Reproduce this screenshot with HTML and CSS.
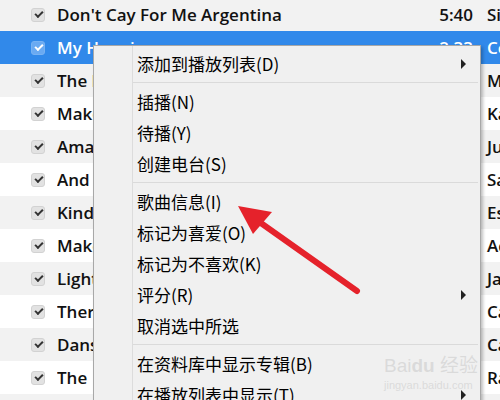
FILE: index.html
```html
<!DOCTYPE html>
<html lang="zh-CN">
<head>
  <meta charset="UTF-8" />
  <title>歌曲列表</title>
  <link rel="stylesheet" href="styles.css">
</head>
<body>
  <div class="tela">
    <ul class="lista">
      <li class="faixa"><span class="caixa"></span><span class="nome">Don't Cay For Me Argentina</span><span class="tempo">5:40</span><span class="artista">Si</span></li>
      <li class="faixa ativa"><span class="caixa"></span><span class="nome">My Happiness</span><span class="tempo">2:33</span><span class="artista">Co</span></li>
      <li class="faixa"><span class="caixa"></span><span class="nome">The Rose</span><span class="tempo">3:40</span><span class="artista">Mi</span></li>
      <li class="faixa"><span class="caixa"></span><span class="nome">Make You Feel My Love</span><span class="tempo">3:32</span><span class="artista">Ka</span></li>
      <li class="faixa"><span class="caixa"></span><span class="nome">Amazing Grace</span><span class="tempo">4:02</span><span class="artista">Ju</span></li>
      <li class="faixa"><span class="caixa"></span><span class="nome">And I Love You So</span><span class="tempo">3:10</span><span class="artista">Sa</span></li>
      <li class="faixa"><span class="caixa"></span><span class="nome">Kind &amp; Generous</span><span class="tempo">3:45</span><span class="artista">Es</span></li>
      <li class="faixa"><span class="caixa"></span><span class="nome">Make It With You</span><span class="tempo">3:18</span><span class="artista">Ad</span></li>
      <li class="faixa"><span class="caixa"></span><span class="nome">Lighthouse</span><span class="tempo">4:21</span><span class="artista">Ja</span></li>
      <li class="faixa"><span class="caixa"></span><span class="nome">There You'll Be</span><span class="tempo">3:42</span><span class="artista">Ca</span></li>
      <li class="faixa"><span class="caixa"></span><span class="nome">Danse Avec Moi</span><span class="tempo">3:55</span><span class="artista">Ca</span></li>
      <li class="faixa"><span class="caixa"></span><span class="nome">The  Sound of Silence</span><span class="tempo">3:07</span><span class="artista">Ra</span></li>
      <li class="faixa"><span class="caixa"></span><span class="nome">Yesterday</span><span class="tempo">2:05</span><span class="artista">Be</span></li>
    </ul>

    <div class="menu">
      <div class="item sub">添加到播放列表(D)</div>
      <div class="linha"></div>
      <div class="item">插播(N)</div>
      <div class="item">待播(Y)</div>
      <div class="item">创建电台(S)</div>
      <div class="linha"></div>
      <div class="item">歌曲信息(I)</div>
      <div class="item">标记为喜爱(O)</div>
      <div class="item">标记为不喜欢(K)</div>
      <div class="item sub">评分(R)</div>
      <div class="item">取消选中所选</div>
      <div class="linha"></div>
      <div class="item">在资料库中显示专辑(B)</div>
      <div class="item sub">在播放列表中显示(T)</div>
      <div class="marca">Bai<b>du</b> 经验<small>jingyan.baidu.com</small></div>
    </div>

    <svg class="seta" width="500" height="400" viewBox="0 0 500 400">
      <line x1="357" y1="291" x2="258" y2="221" stroke="#e5222b" stroke-width="6" stroke-linecap="round" />
      <polygon points="238,206 272,212 253,234" fill="#e5222b" />
    </svg>
  </div>
</body>
</html>
```

FILE: styles.css
```css
:root {
  --cinza-linha: #f2f2f2;
  --azul-sel: #3189ea;
  --fundo-menu: #f0f0f0;
  --borda-menu: #a8a8a8;
  --separador: #dadada;
}
* {
  box-sizing: border-box;
}
body {
  margin: 0;
  width: 500px;
  height: 400px;
  overflow: hidden;
  background: white;
}
.tela {
  position: relative;
  width: 500px;
  height: 400px;
  overflow: hidden;
}
.lista {
  list-style: none;
  margin: -2px 0 0;
  padding: 0;
  width: 500px;
  font-family: 'Open Sans', 'Noto Sans', sans-serif;
  font-weight: 600;
  font-size: 17px;
  color: #111;
}
.faixa {
  display: flex;
  align-items: center;
  height: 33px;
  white-space: pre;
  overflow: hidden;
}
.faixa:nth-child(odd) {
  background-color: var(--cinza-linha);
}
.faixa.ativa {
  background-color: var(--azul-sel);
  color: white;
}
.caixa {
  width: 14px;
  height: 14px;
  margin-left: 31px;
  margin-right: 12px;
  border-radius: 3px;
  background-color: #e2e2e2;
  border: 1px solid #d2d2d2;
  position: relative;
  flex: none;
}
.caixa::after {
  content: '';
  position: absolute;
  left: 3px;
  top: 2px;
  width: 6px;
  height: 3px;
  border-left: 2px solid #333;
  border-bottom: 2px solid #333;
  transform: rotate(-45deg);
}
.ativa .caixa {
  background-color: #6aaaf2;
  border-color: #78b2f2;
}
.ativa .caixa::after {
  border-color: white;
}
.nome {
  flex: none;
  width: 380px;
  overflow: hidden;
}
.tempo {
  flex: none;
  width: 36px;
  text-align: right;
}
.artista {
  margin-left: 14px;
}
.menu {
  position: absolute;
  left: 93px;
  top: 45px;
  width: 388px;
  height: 370px;
  padding-top: 2px;
  background-color: var(--fundo-menu);
  border: 1px solid var(--borda-menu);
  box-shadow: 2px 2px 3px rgba(0,0,0,0.25);
  font-family: 'Noto Sans CJK SC', 'Noto Sans', sans-serif;
  font-size: 17px;
  color: #000;
}
.menu::before {
  content: '';
  position: absolute;
  left: 38px;
  top: 0;
  bottom: 0;
  border-left: 1px solid #dcdcdc;
}
.item {
  height: 31px;
  line-height: 31px;
  padding-left: 43px;
  position: relative;
}
.item.sub::after {
  content: '';
  position: absolute;
  right: 14px;
  top: 11px;
  border-left: 5px solid #222;
  border-top: 5px solid transparent;
  border-bottom: 5px solid transparent;
}
.linha {
  height: 1px;
  margin: 3px 2px 3px 39px;
  background-color: var(--separador);
}
.marca {
  position: absolute;
  left: 290px;
  top: 308px;
  white-space: nowrap;
  font-family: 'Liberation Sans', 'Noto Sans CJK SC', sans-serif;
  font-size: 19px;
  line-height: 24px;
  color: rgba(200,200,200,0.55);
}
.marca b {
  font-weight: 700;
}
.marca small {
  display: block;
  font-size: 11px;
  line-height: 14px;
}
.seta {
  position: absolute;
  left: 0;
  top: 0;
  pointer-events: none;
}
```
